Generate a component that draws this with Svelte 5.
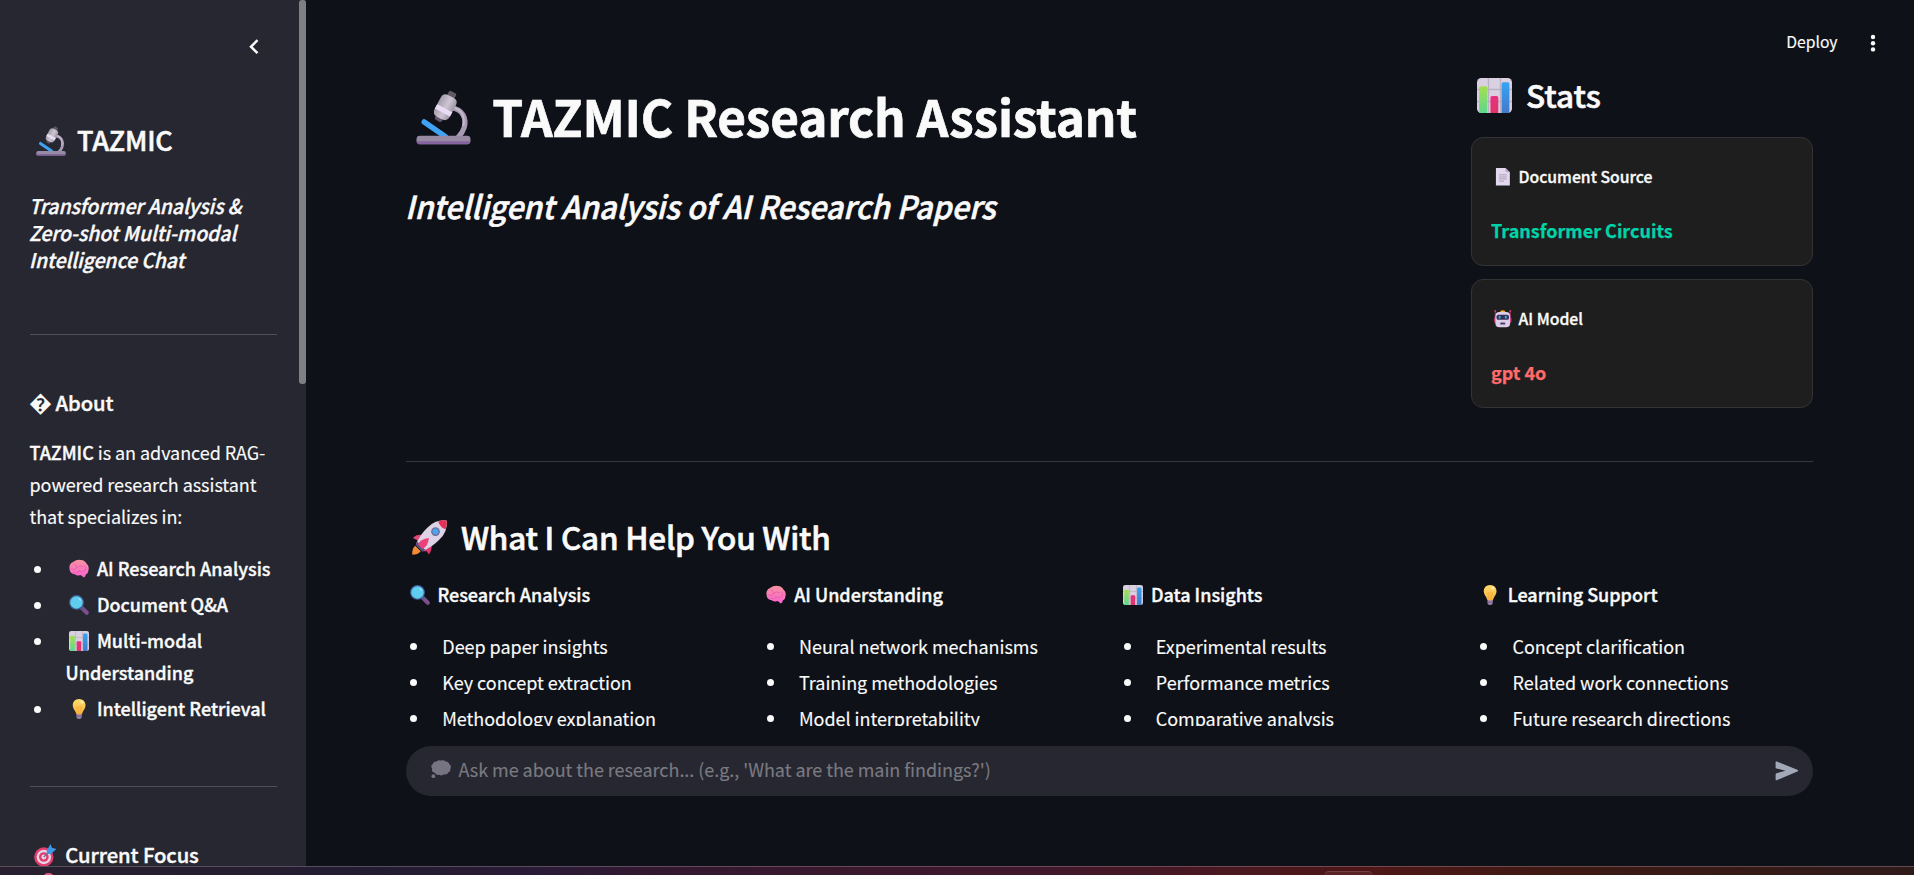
<script>
  const abilities = [
    { icon: 'brain', text: 'AI Research Analysis' },
    { icon: 'search', text: 'Document Q&A' },
    { icon: 'chart', text: 'Multi-modal Understanding' },
    { icon: 'bulb', text: 'Intelligent Retrieval' }
  ];
  const stats = [
    { icon: 'page', label: 'Document Source', value: 'Transformer Circuits', tone: 'green' },
    { icon: 'robot', label: 'AI Model', value: 'gpt 4o', tone: 'red' }
  ];
  const columns = [
    { icon: 'search', title: 'Research Analysis', items: ['Deep paper insights', 'Key concept extraction', 'Methodology explanation'] },
    { icon: 'brain', title: 'AI Understanding', items: ['Neural network mechanisms', 'Training methodologies', 'Model interpretability'] },
    { icon: 'chart', title: 'Data Insights', items: ['Experimental results', 'Performance metrics', 'Comparative analysis'] },
    { icon: 'bulb', title: 'Learning Support', items: ['Concept clarification', 'Related work connections', 'Future research directions'] }
  ];
</script>

{#snippet emoji(name)}
  <svg class="emoji" viewBox="0 0 32 32" aria-hidden="true">
    {#if name === 'microscope'}
      <path d="M20.5 10.5 C27.5 11 29.5 17 28 22 C27.3 24.4 26 26 24.5 27.5" fill="none" stroke="#a99ab4" stroke-width="3" stroke-linecap="round" />
      <path d="M21 10 C27 11 28.7 16 27.4 21" fill="none" stroke="#c3b8cb" stroke-width="1.2" />
      <path d="M4.8 18.6 L17 27" stroke="#3fa2f2" stroke-width="3.2" stroke-linecap="round" />
      <g transform="translate(.5 .8) rotate(28 16 9.500) translate(.9 .5) scale(.95)">
        <rect x="13.700" y="-1.500" width="5" height="5" rx="1" fill="#5f5866" />
        <rect x="13.600" y="14" width="5" height="4.500" rx="1.500" fill="#62566c" />
        <path d="M11 5 Q11 1.500 14.500 1.500 H18 Q21.500 1.500 21.500 5 V13 Q21.500 16.500 17.500 16.500 H15 Q11 16.500 11 13 Z" fill="url(#g-steel)" />
        <rect x="11" y="9.600" width="10.500" height="3" fill="#eadcf6" />
      </g>
      <rect x="0.300" y="26.600" width="31.400" height="5" rx="2" fill="#978aa3" />
      <path d="M.3 29.800 H31.700 Q31.400 31.600 29.700 31.600 H2.300 Q.6 31.600 .3 29.800 Z" fill="#85649f" />
    {:else if name === 'chart'}
      <rect width="32" height="32" rx="4" fill="#d9d1e2" />
      <path d="M10.500 0 V32 M21.500 0 V32 M0 10.500 H32 M0 21.500 H32" stroke="#b9b2c2" stroke-width="1.200" />
      <path d="M2 32 V9 Q2 7.500 3.500 7.500 H7.800 Q9.300 7.500 9.300 9 V32 Z" fill="url(#g-green)" />
      <path d="M12.300 32 V18 Q12.300 16.500 13.800 16.500 H18 Q19.500 16.500 19.500 18 V32 Z" fill="url(#g-pink)" />
      <path d="M22.500 32 V5.500 Q22.500 4 24 4 H28 Q29.600 4 29.600 5.500 V32 Z" fill="url(#g-blue)" />
    {:else if name === 'search'}
      <path d="M20.500 20.500 L28.500 28.500" stroke="#7d4f8c" stroke-width="6.500" stroke-linecap="round" />
      <path d="M18 18 L23 23" stroke="#4a5b8e" stroke-width="3.500" />
      <circle cx="12" cy="12" r="11.800" fill="#43629f" />
      <circle cx="12" cy="12" r="9.900" fill="#5fcdee" />
      <path d="M14.500 4 Q19 5.500 20 10 Q16.500 9.500 14.500 4 Z" fill="#a6e8fa" />
    {:else if name === 'brain'}
      <path d="M1 17 Q-1 8 7 4.500 Q12 .5 19 1.500 Q26 2 28.500 8 Q33 12 31 19 Q31 23.500 27 25 Q26.500 29 23.500 29.500 Q21 27 18 25.500 Q12 27.500 9 24.500 Q2 24 1 17 Z" fill="url(#g-brain)" />
      <path d="M4 16 Q9 19 12 14 Q16 9 22 12 M12 14 Q12 8 8 8 M15 19 Q20 22 26 18 Q28 14 25 11 M7 21 Q12 24 16 20" fill="none" stroke="#e058a6" stroke-width="1.100" stroke-linecap="round" />
    {:else if name === 'bulb'}
      <path d="M12 24 H20.500 V28.500 Q20.500 32 16.300 32 Q12 32 12 28.500 Z" fill="#9a83ad" />
      <path d="M12 27.500 H20.500" stroke="#6b567d" stroke-width="1.200" />
      <path d="M16.200 0 C10 0 6 4.500 6 10 C6 15.500 10 18 11.300 23 Q11.600 24.600 13 24.600 H19.500 Q21 24.600 21.200 23 C22.500 18 26.500 15.500 26.500 10 C26.500 4.500 22.400 0 16.200 0 Z" fill="url(#g-bulb)" />
      <path d="M14.500 23 V17 Q12 16 12.500 13.500 Q14 11.500 16.200 13.500 Q18.500 11.500 20 13.500 Q20.500 16 18 17 V23" fill="none" stroke="#f5a02c" stroke-width="1.100" />
      <ellipse cx="20.500" cy="5" rx="2.600" ry="2" fill="#fff1b8" transform="rotate(35 20.500 5)" />
    {:else if name === 'page'}
      <path d="M3.500 0 H21 L29 8 V32 H3.500 Z" fill="#e3d8ee" />
      <path d="M21 0 L29 8 H23 Q21 8 21 6 Z" fill="#b5a8c4" />
      <path d="M9 12.500 H23.500 M9 16.500 H23.500 M9 20 H23.500 M9 24 H18.500" stroke="#a095ac" stroke-width="1.500" />
    {:else if name === 'robot'}
      <path d="M2.300 2 V14 M29.700 2 V14" stroke="#b8366f" stroke-width="1.800" />
      <circle cx="2.300" cy="2" r="1.800" fill="#d23a70" /><circle cx="29.700" cy="2" r="1.800" fill="#d23a70" />
      <rect x="0" y="12" width="32" height="12" rx="4" fill="#c43a77" />
      <path d="M11 4 Q11 .6 16 .6 Q21 .6 21 4 Z" fill="#f2b236" />
      <rect x="2.600" y="3.500" width="26.800" height="28" rx="7" fill="#dccdea" />
      <rect x="4.500" y="8.500" width="23" height="9.500" rx="4" fill="#343050" />
      <rect x="8.500" y="10.500" width="3.600" height="5.600" rx="1.500" fill="#3ba0ea" /><rect x="19.900" y="10.500" width="3.600" height="5.600" rx="1.500" fill="#3ba0ea" />
      <rect x="11.500" y="23" width="9" height="3.400" rx="1" fill="#4d4360" />
    {:else if name === 'rocket'}
      <path d="M3 23.500 Q-.3 26 .3 31.700 Q5.500 31.700 8 28.500 Z" fill="#f58a35" />
      <path d="M10 14 Q4.500 12.500 .8 16.500 L5 18.500 L3.500 22.500 Z" fill="#e14873" />
      <path d="M18 22 Q18.500 27.500 15.500 31.500 L13.500 28.500 L9.500 28.500 Z" fill="#e0356c" />
      <path d="M31.700 .4 Q33 11 24.500 18.500 Q18.500 24.500 10.500 28 L4 21.500 Q8 12.500 14 7 Q21.500 -.5 31.700 .4 Z" fill="#ded2e6" />
      <path d="M31.700 .4 Q32.200 4.800 30.700 8.500 Q26 7 24 1.600 Q27.500 0 31.700 .4 Z" fill="#e62e57" />
      <path d="M4.800 20 L12 27.300 L9.500 29 L3.300 22.800 Z" fill="#4c5486" />
      <path d="M15.500 16.500 Q7.500 17.500 5.500 22.500 L9.500 26.500 Q14.500 24.500 15.500 16.500 Z" fill="#ee3f78" />
      <circle cx="21.500" cy="10.600" r="4" fill="#6e6b99" /><circle cx="21.500" cy="10.600" r="2.800" fill="#4ba4ee" />
    {:else if name === 'target'}
      <circle cx="14" cy="18.500" r="13.800" fill="#e23d6d" />
      <circle cx="14" cy="18.500" r="10.300" fill="#e8d6e6" />
      <circle cx="14" cy="18.500" r="6.900" fill="#e23d6d" />
      <circle cx="14" cy="18.500" r="3.500" fill="#e8d6e6" />
      <path d="M14 18.500 L23 9" stroke="#7a6a95" stroke-width="2" />
      <path d="M18 9.500 L23.500 0 L25.500 5.500 L32 7 L23.500 14.500 L18.500 14 Z" fill="#3d97e6" />
    {:else if name === 'thought'}
      <path d="M2 14 Q-1.500 9 3 6.500 Q4 2 9 2.500 Q12 -.8 16 1 Q20 -1 23.500 2.300 Q28.500 2 29 6.500 Q33.500 9 31 13.500 Q32 18 28 19.500 Q26 24.500 21 23 Q17 26 13 23.500 Q8 25 6 20.500 Q0 19.500 2 14 Z" fill="#777481" />
      <circle cx="3.800" cy="26" r="3" fill="#777481" />
    {/if}
  </svg>
{/snippet}

<svg class="defs" aria-hidden="true">
  <defs>
    <linearGradient id="g-steel"><stop offset="0" stop-color="#a69bac" /><stop offset=".55" stop-color="#cdc6d2" /><stop offset="1" stop-color="#9f96a6" /></linearGradient>
    <linearGradient id="g-green" x2="0" y2="1"><stop stop-color="#a6df4f" /><stop offset="1" stop-color="#5bd88c" /></linearGradient>
    <linearGradient id="g-pink" x2="0" y2="1"><stop stop-color="#e8307f" /><stop offset="1" stop-color="#dd3568" /></linearGradient>
    <linearGradient id="g-blue" x2="0" y2="1"><stop stop-color="#35a4f4" /><stop offset="1" stop-color="#4379cb" /></linearGradient>
    <linearGradient id="g-brain" x2="0" y2="1"><stop stop-color="#f793a0" /><stop offset="1" stop-color="#fb63d2" /></linearGradient>
    <linearGradient id="g-bulb" x2="0" y2="1"><stop stop-color="#ffdc6c" /><stop offset="1" stop-color="#f8b23c" /></linearGradient>
  </defs>
</svg>

<div class="screen">
  <div class="app">
    <aside>
      <div class="side-content">
        <div class="side-head">
          <svg class="chevron" viewBox="0 0 10 16"><path d="M8.500 1.200 L2 7.700 L8.500 14.200" fill="none" stroke="#fafafa" stroke-width="2.500" /></svg>
        </div>
        <h2 class="brand">{@render emoji('microscope')}TAZMIC</h2>
        <h3 class="tagline"><em>Transformer Analysis &amp;<br />Zero-shot Multi-modal<br />Intelligence Chat</em></h3>
        <hr />
        <h3 class="about"><span class="unknown">�</span>About</h3>
        <p><strong>TAZMIC</strong> is an advanced RAG-<br />powered research assistant<br />that specializes in:</p>
        <ul class="abilities">
          {#each abilities as a}
            <li><strong>{@render emoji(a.icon)}{a.text}</strong></li>
          {/each}
        </ul>
        <hr />
        <h3 class="focus">{@render emoji('target')}Current Focus</h3>
      </div>
      <div class="scroll"><div class="thumb"></div></div>
    </aside>

    <main>
      <div class="content">
        <div class="hero">
          <div class="intro">
            <h1>{@render emoji('microscope')}TAZMIC Research Assistant</h1>
            <h3 class="subtitle"><em>Intelligent Analysis of AI Research Papers</em></h3>
          </div>
          <div class="stats">
            <div class="toolbar">
              <span>Deploy</span>
              <svg viewBox="0 0 6 18"><circle cx="3" cy="3" r="2.200" /><circle cx="3" cy="9.200" r="2.200" /><circle cx="3" cy="15.400" r="2.200" /></svg>
            </div>
            <h3 class="big">{@render emoji('chart')}Stats</h3>
            {#each stats as s}
              <div class="card">
                <h4>{@render emoji(s.icon)}{s.label}</h4>
                <p class={s.tone}>{s.value}</p>
              </div>
            {/each}
          </div>
        </div>
        <hr />
        <h3 class="big help">{@render emoji('rocket')}What I Can Help You With</h3>
        <div class="cols">
          {#each columns as c}
            <section>
              <p><strong>{@render emoji(c.icon)}{c.title}</strong></p>
              <ul>
                {#each c.items as item}<li>{item}</li>{/each}
              </ul>
            </section>
          {/each}
        </div>
      </div>
      <div class="ask">
        <span>{@render emoji('thought')}Ask me about the research... (e.g., 'What are the main findings?')</span>
        <svg class="send" viewBox="0 0 24 20"><path d="M1.600 .4 L22.300 8.800 Q24 9.700 22.300 10.600 L1.600 19.300 Q.6 19.600 .6 18.500 V13.300 Q.6 12.500 1.500 12.200 L10.500 9.800 L1.500 7.400 Q.6 7.200 .6 6.400 V1.300 Q.6 .1 1.600 .4 Z" fill="#a3a8b8" /></svg>
      </div>
    </main>
  </div>
  <footer><i class="dot"></i><i class="tab"></i></footer>
</div>

<style>
  :global(body) { margin: 0; background: #0e1117; }
  .defs { position: absolute; width: 0; height: 0; }
  .screen {
    width: 1914px; height: 875px; overflow: hidden;
    display: flex; flex-direction: column;
    background: #0e1117; color: #fafafa;
    font: 400 18px/32px 'Noto Sans CJK SC', 'Noto Sans', sans-serif;
    letter-spacing: -.04px;
    white-space: nowrap;
  }
  .app { display: flex; height: 866px; overflow: hidden; }
  h1, h2, h3, h4, p, ul { margin: 0; padding: 0; font-weight: 500; }
  h2, h3, h4, strong { font-weight: 500; letter-spacing: 0; -webkit-text-stroke: .02em currentColor; }
  p, li { font-weight: 400; }
  li, .side-content p { -webkit-text-stroke: .12px currentColor; }
  hr { margin: 0; border: 0; height: 1px; background: rgba(250, 250, 250, .2); }
  em { display: inline-block; font-style: italic; transform-origin: 0 0; }
  .emoji { width: 1.111em; height: 1.111em; margin: 0 .428em 0 .206em; vertical-align: -.167em; overflow: visible; -webkit-text-stroke: 0; }

  aside { width: 306px; display: flex; background: #262730; }
  .side-content { width: 247px; padding-left: 30px; flex: none; }
  .scroll { margin-left: auto; width: 7px; }
  .thumb { height: 384px; background: #7f7e84; border-radius: 3px; }
  .side-head { height: 122px; display: flex; justify-content: flex-end; padding-right: 18px; box-sizing: border-box; }
  .chevron { width: 10px; height: 16px; margin-top: 39px; }
  .brand { font-size: 27px; line-height: 36px; height: 36px; letter-spacing: -.15px; }
  .tagline { margin-top: 34px; font-size: 20.25px; line-height: 27px; height: 81px; }
  .tagline em { transform: translateX(-1px) scaleX(.957); }
  .tagline + hr { margin-top: 61px; }
  .about, .focus { font-size: 20.25px; line-height: 27px; height: 27px; letter-spacing: -.1px; }
  .about { margin-top: 54px; }
  .unknown { display: inline-block; width: 26.500px; margin-left: -1px; font-size: 23px; line-height: 20px; -webkit-text-stroke: 0; }
  .side-content p { margin: 20px 0 0 -.5px; letter-spacing: -.06px; }
  ul { list-style: none; }
  li { position: relative; padding-left: 36.300px; }
  li + li { margin-top: 4px; }
  li::before { content: ''; position: absolute; left: 4px; top: 13px; width: 7px; height: 7px; border-radius: 50%; background: #fafafa; }
  .abilities { margin: 20px 0 0; white-space: normal; width: 256px; }
  .abilities li { padding-left: 35.500px; }
  .abilities + hr { margin-top: 62px; }
  .abilities li::before { top: 14px; }
  .focus { margin-top: 54px; }

  main { width: 1407px; padding-left: 100px; }
  .content { height: 726px; overflow: hidden; width: 1508px; }
  .hero { display: flex; height: 461px; }
  .intro { width: 1065px; padding-top: 83px; }
  h1 { font-size: 49.5px; line-height: 66px; font-weight: 700; letter-spacing: -.14px; -webkit-text-stroke: .7px currentColor; }
  .subtitle { margin-top: 35px; font-size: 31.5px; line-height: 42px; }
  .subtitle em { transform: translateX(-1px) scaleX(.964); }
  .toolbar { height: 73px; width: 404.500px; box-sizing: border-box; padding-top: 32px; display: flex; justify-content: flex-end; align-items: flex-start; gap: 32px; font-size: 15.75px; line-height: 20px; }
  .toolbar span { -webkit-text-stroke: .15px currentColor; }
  .toolbar svg { width: 6px; height: 18px; margin-top: 1.500px; fill: #fafafa; }
  .big { font-size: 31.5px; line-height: 42px; height: 42px; }
  .stats .big { margin-bottom: 22px; }
  .card { box-sizing: border-box; width: 342px; height: 129px; margin-bottom: 13px; padding: 28px 19px 0; border: 1px solid #333; border-radius: 12px; background: #1e1e1e; }
  h4 { font-size: 15.75px; line-height: 21px; height: 21px; }
  .card p { margin-top: 27px; font-weight: 700; -webkit-text-stroke: .25px currentColor; letter-spacing: 0; }
  .green { color: #00d4aa; }
  .red { color: #ff6b6b; }
  .content > hr { width: 1407px; background: rgba(250, 250, 250, .17); }
  .help { margin-top: 53px; letter-spacing: -.24px; }
  .cols { display: grid; grid-template-columns: repeat(4, 1fr); gap: 20px; width: 1407px; margin-top: 21px; }
  .cols ul { margin-top: 20px; }

  .ask { box-sizing: border-box; width: 1407px; height: 50px; margin-top: 20px; padding: 0 14px 0 21px; border-radius: 25px; background: #262730; color: #7a7a80; display: flex; align-items: center; justify-content: space-between; }
  .ask span { padding-bottom: 4px; -webkit-text-stroke: .15px currentColor; letter-spacing: -.04px; }
  .send { width: 24px; height: 20px; }

  footer { height: 9px; box-sizing: border-box; position: relative; border-top: 1px solid rgba(200, 180, 190, .32); background: linear-gradient(90deg, #28202f 0, #231c31 20%, #2a1a36 29%, #32182f 34%, #41172a 55%, #49171f 65%, #4d1617 72%, #3d1913 82%, #2f1a1b 100%); }
  .dot { position: absolute; left: 43px; top: 6px; width: 11px; height: 8px; border-radius: 5px 5px 0 0; background: #e2577f; }
  .tab { position: absolute; left: 1324px; top: 4px; width: 49px; height: 6px; border-radius: 5px 5px 0 0; border-top: 1px solid #754042; background: #592326; box-sizing: border-box; }
</style>
